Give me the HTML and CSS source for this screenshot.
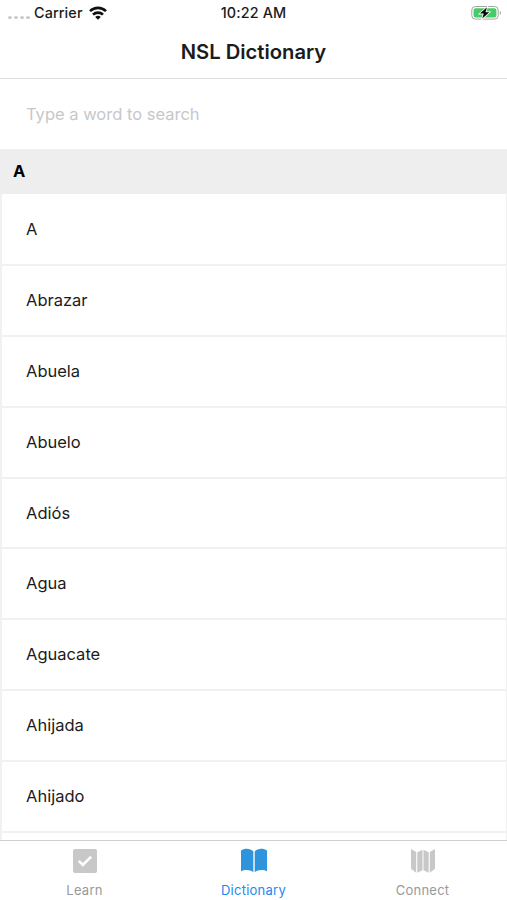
FILE: index.html
```html
<!DOCTYPE html>
<html lang="es">
<head>
<meta charset="utf-8">
<title>NSL Dictionary</title>
<link rel="stylesheet" href="styles.css">
</head>
<body>
<div class="app">
  <header class="status">
    <div class="carrier">
      <span class="dots"><i></i><i></i><i></i><i></i></span>
      <span class="carrier-name">Carrier</span>
      <svg class="wifi" width="18" height="14" viewBox="0 0 18 14" fill="none" stroke="#111" stroke-width="2.6"><path d="M1 5.1a11.5 11.5 0 0 1 16 0"/><path d="M4 8.6a7.2 7.2 0 0 1 10 0"/><path d="M9 13.8 6.2 11a4 4 0 0 1 5.6 0z" fill="#111" stroke="none"/></svg>
    </div>
    <div class="time">10:22 AM</div>
    <div class="power">
      <svg width="31" height="16" viewBox="0 0 31 16"><rect x=".8" y="1.5" width="26.4" height="12.6" rx="3.5" fill="#fff" stroke="#a5a5a5"/><rect x="2.6" y="3.2" width="22.8" height="9.2" rx="2" fill="#45cc68"/><path d="M28.8 5.7c1.5.5 1.5 3.7 0 4.2z" fill="#a5a5a5"/><path d="M16 2.3 9 8.6h3.8l-1.5 5 7-6.4h-3.8z" fill="#000" stroke="#fff" stroke-width="1.6" paint-order="stroke"/></svg>
    </div>
  </header>
  <h1 class="title">NSL Dictionary</h1>
  <div class="search"><span>Type a word to search</span></div>
  <h2 class="section">A</h2>
  <ul class="words">
    <li>A</li>
    <li>Abrazar</li>
    <li>Abuela</li>
    <li>Abuelo</li>
    <li>Adiós</li>
    <li>Agua</li>
    <li>Aguacate</li>
    <li>Ahijada</li>
    <li>Ahijado</li>
    <li></li>
  </ul>
  <nav class="tabs">
    <a class="tab">
      <svg width="26" height="26" viewBox="0 0 26 26"><rect x="1" y="1" width="24" height="24" rx="2" fill="#c8c8c8"/><path d="m6.8 12.8 4.1 4.1 8.3-8.3" fill="none" stroke="#fff" stroke-width="2.6"/></svg>
      <span>Learn</span>
    </a>
    <a class="tab active">
      <svg width="28" height="26" viewBox="0 0 28 26" fill="#2e95dc"><path d="M1 2.5C4.5-.1 10.5-.1 13.3 3.6V24.3C10.5 21.3 4.5 21.3 1 23.2z"/><path d="M27 2.5C23.5-.1 17.5-.1 14.7 3.6V24.3C17.5 21.3 23.5 21.3 27 23.2z"/></svg>
      <span>Dictionary</span>
    </a>
    <a class="tab">
      <svg width="26" height="26" viewBox="0 0 26 26" fill="#c8c8c8"><path d="M1 1l5.2 3v20.8L1 20.8z"/><path d="M7.3 4.2l5.2-2.5v20.6l-5.2 2.5z"/><path d="M13.5 1.7l5.2 2.5v20.6l-5.2-2.5z"/><path d="M25 1l-5.2 3v20.8l5.2-4z"/></svg>
      <span>Connect</span>
    </a>
  </nav>
</div>
</body>
</html>
```
FILE: styles.css
```css
* { box-sizing: border-box; }
body {
  margin: 0;
  background: #fff;
  color: #1b1b1b;
  font-family: Inter, "Liberation Sans", sans-serif;
}
.app {
  display: flex;
  flex-direction: column;
  height: 900px;
  overflow: hidden;
}
.status {
  flex: none;
  display: grid;
  grid-template-columns: 1fr auto 1fr;
  align-items: center;
  height: 26px;
  padding: 0 5px 0 8px;
  font-size: 14.4px;
  font-weight: 500;
}
.carrier { display: flex; align-items: center; }
.carrier-name, .time { line-height: 16px; padding-bottom: 1px; }
.carrier-name { letter-spacing: .1px; }
.dots { display: flex; gap: 2px; margin: 8px 4px 0 0; }
.dots i { width: 4px; height: 3px; border-radius: 50%; background: #c9c9c9; }
.wifi { margin-left: 6px; margin-bottom: 1px; }
.time { margin-left: -3px; letter-spacing: .15px; }
.power { display: flex; justify-content: flex-end; }
.title {
  flex: none;
  height: 53px;
  margin: 0;
  border-bottom: 1px solid #dedede;
  font-size: 20.2px;
  font-weight: 580;
  line-height: 52px;
  text-align: center;
}
.search {
  flex: none;
  height: 70px;
  padding-left: 26px;
  color: #c7c7cb;
  font-size: 16.5px;
  line-height: 70px;
}
.section {
  flex: none;
  height: 45px;
  margin: 0;
  padding-left: 13px;
  background: #eee;
  color: #000;
  font-size: 16.5px;
  font-weight: 700;
  line-height: 45px;
}
.words {
  flex: 1;
  min-height: 0;
  overflow: hidden;
  margin: 0;
  padding: 0;
  list-style: none;
  border-left: 2px solid #f1f1f1;
  border-right: 1px solid #f1f1f1;
}
.words li {
  height: 70.9px;
  padding-left: 24px;
  border-bottom: 1px solid #f1f1f1;
  box-shadow: 0 1px 0 #f1f1f1;
  font-size: 16.5px;
  line-height: 70px;
}
.tabs {
  flex: none;
  display: grid;
  grid-template-columns: repeat(3, 1fr);
  height: 60px;
  border-top: 1px solid #d0d0d0;
}
.tab {
  display: flex;
  flex-direction: column;
  align-items: center;
  padding-top: 7px;
  color: #999;
  font-size: 13px;
  letter-spacing: .25px;
  line-height: 16px;
}
.tab span { margin-top: 8px; }
.active { color: #2388f2; }
```
